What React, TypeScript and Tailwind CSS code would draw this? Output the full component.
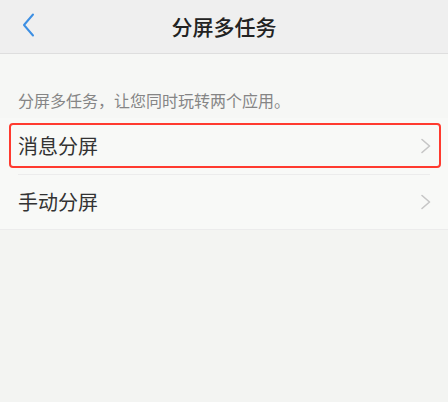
import React from "react";

function Chevron({ className }: { className?: string }) {
  return (
    <svg className={className} viewBox="0 0 12 16" fill="none">
      <path d="M2 1.5 L9.5 8 L2 14.5" stroke="currentColor" strokeWidth="1.6" strokeLinecap="round" strokeLinejoin="round" />
    </svg>
  );
}

export default function App() {
  return (
    <div
      className="w-[448px] h-[402px] bg-[#f3f4f2] overflow-hidden flex flex-col"
      style={{ fontFamily: '"Noto Sans CJK SC", "Noto Sans", sans-serif' }}
    >
      <div className="relative h-[54px] shrink-0 bg-[#efefef] border-b border-[#dedede] flex items-center justify-center">
        <svg className="absolute left-[22px] top-[13px] w-[13px] h-[24px] text-[#3d8fe3]" viewBox="0 0 13 24" fill="none">
          <path d="M11 1.5 L2 12 L11 22.5" stroke="currentColor" strokeWidth="2" strokeLinecap="round" strokeLinejoin="round" />
        </svg>
        <span className="text-[21px] leading-none font-medium text-[#222]">分屏多任务</span>
      </div>
      <div className="bg-[#f6f7f5] pt-[35px] pb-[7px] px-[18px]">
        <p className="text-[16px] leading-[22px] text-[#858585]">分屏多任务，让您同时玩转两个应用。</p>
      </div>
      <div className="bg-[#f8f9f7]">
        <div className="relative h-[56px] flex items-center justify-between pl-[18px] pr-[16px]">
          <span className="text-[20px] text-[#333]">消息分屏</span>
          <Chevron className="w-[12px] h-[16px] text-[#c6c6c6]" />
          <div className="absolute left-[9px] right-[7px] top-[5px] h-[45px] border-[2.5px] border-[#ff3a2f] rounded-[4px]" />
        </div>
        <div className="mx-[18px] h-px bg-[#ececec]" />
        <div className="h-[55px] flex items-center justify-between pl-[18px] pr-[16px] border-b border-[#ececec]">
          <span className="text-[20px] text-[#333]">手动分屏</span>
          <Chevron className="w-[12px] h-[16px] text-[#c6c6c6]" />
        </div>
      </div>
    </div>
  );
}
